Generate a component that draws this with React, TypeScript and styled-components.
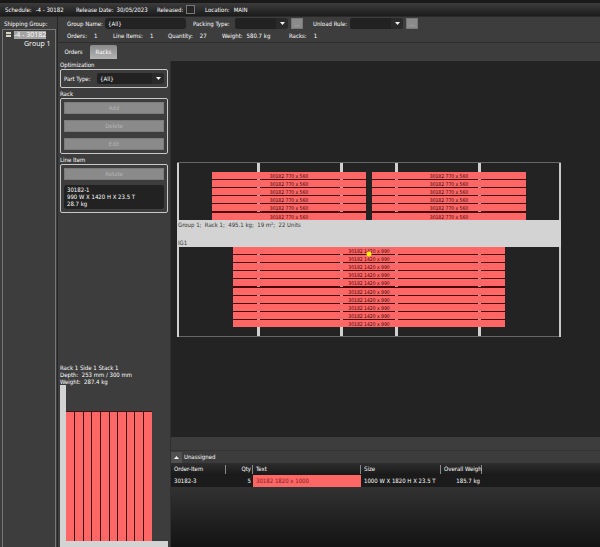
import React from "react";
import styled, { createGlobalStyle } from "styled-components";

const Global = createGlobalStyle`
  * { box-sizing: border-box; }
  body { margin: 0; background: #3d3d3d; }
  body, button, input, select, textarea {
    font-family: "DejaVu Sans Condensed", "DejaVu Sans", "Noto Sans", sans-serif;
    font-size: 6px;
    line-height: 8px;
    color: #fff;
  }
`;

const Page = styled.div`
  min-height: 100vh;
  display: flex;
  flex-direction: column;
  border-top: 3px solid #191919;
`;

const Header = styled.header`
  height: 14px;
  padding: 0 5px;
  display: grid;
  grid-template-columns: 71px 81px 48px 1fr;
  align-items: center;
  background: linear-gradient(#3c3c3c, #1b1b1b);
  border-bottom: 1px solid #2a2a2a;
  white-space: nowrap;
`;

const Pair = styled.span<{ $gap?: number }>`
  display: flex;
  align-items: center;
  gap: ${(p) => p.$gap ?? 4}px;
  white-space: nowrap;
`;

const Tick = styled.input`
  appearance: none;
  width: 9px;
  height: 9px;
  margin: 0;
  border: 1px solid #777;
  background: #262626;
`;

const Body = styled.div`
  flex: 1;
  display: grid;
  grid-template-columns: 58px 1fr;
`;

const Groups = styled.nav`
  display: flex;
  flex-direction: column;
  padding: 2px 1px 0 2px;
  border-right: 1px solid #262626;
`;

const GroupsTitle = styled.div`
  height: 10px;
  padding: 0 2px;
  line-height: 9px;
  white-space: nowrap;
`;

const Tree = styled.ul`
  flex: 1;
  margin: 0;
  padding: 0;
  list-style: none;
  border: 1px solid #777;
  border-bottom: 0;
  font-family: "Open Sans", "Noto Sans", sans-serif;
  font-size: 7px;
`;

const TreeItem = styled.li<{ $child?: boolean }>`
  display: flex;
  align-items: center;
  gap: 3px;
  height: 9px;
  padding-left: ${(p) => (p.$child ? 21 : 3)}px;
  white-space: nowrap;
`;

const Toggle = styled.button`
  width: 5px;
  height: 5px;
  padding: 0;
  border: 0;
  background: linear-gradient(#d8d4c4 40%, #555 40%, #555 60%, #d8d4c4 60%);
`;

const Picked = styled.span`
  background: #a5a5a5;
  color: #fff;
  height: 8px;
`;

const Main = styled.main`
  min-width: 0;
  display: flex;
  flex-direction: column;
`;

const Filters = styled.section`
  padding: 1px 9px 0;
  height: 26px;
  border-bottom: 1px solid #2d2d2d;
`;

const FilterRow = styled.div`
  display: flex;
  align-items: center;
  height: 11px;
`;

const FilterLabel = styled.label<{ $w: number }>`
  width: ${(p) => p.$w}px;
  white-space: nowrap;
`;

const NameBox = styled.input`
  width: 81px;
  height: 11px;
  margin-right: 7px;
  padding: 0 3px;
  border: 0;
  border-radius: 3px;
  background: #232323;
`;

const Drop = styled.span<{ $w?: number }>`
  display: grid;
  align-items: center;
  ${(p) => (p.$w ? `width: ${p.$w}px;` : "flex: 1;")}
  height: 11px;
  border-radius: 2px;
  background: linear-gradient(90deg, #222 calc(100% - 12px), #2a2a2a calc(100% - 12px));
  select, svg { grid-area: 1 / 1; }
  svg { justify-self: end; margin-right: 3px; pointer-events: none; }
`;

const Select = styled.select`
  appearance: none;
  width: 100%;
  height: 100%;
  padding: 0 3px;
  border: 0;
  background: transparent;
`;

const More = styled.button`
  width: 12px;
  height: 11px;
  margin: 0 10px 0 3px;
  padding: 0;
  border: 1px solid #777;
  background: #8b8b8b;
  color: #c4c4c4;
  line-height: 6px;
`;

const Stats = styled.div`
  display: grid;
  grid-template-columns: 46px 55px 54px 67px 1fr;
  height: 13px;
  align-items: center;
`;

const Tabs = styled.div`
  height: 18px;
  display: flex;
  align-items: center;
  gap: 1px;
`;

const Tab = styled.button<{ $on?: boolean }>`
  height: 14px;
  width: ${(p) => (p.$on ? 27 : 31)}px;
  padding: 0;
  border: 0;
  border-radius: 2px 2px 0 0;
  background: ${(p) => (p.$on ? "linear-gradient(#8a8a8a, #b4b4b4)" : "transparent")};
`;

const Work = styled.div`
  flex: 1;
  display: grid;
  grid-template-columns: 113px 1fr;
`;

const Side = styled.aside`
  display: flex;
  flex-direction: column;
  padding: 0 2px;
  border-right: 1px solid #303030;
`;

const GroupTitle = styled.h2`
  margin: 0;
  height: 8px;
  font-size: 6px;
  line-height: 8px;
  font-weight: 400;
`;

const Frame = styled.section<{ $gap?: number }>`
  display: flex;
  flex-direction: column;
  gap: ${(p) => p.$gap ?? 0}px;
  margin-bottom: 2px;
  padding: 3px;
  border: 1px solid #c9c9c9;
  border-radius: 2px;
`;

const Line = styled.div`
  display: flex;
  align-items: center;
`;

const Action = styled.button`
  height: 12px;
  padding: 0;
  border: 1px solid #7c7c7c;
  background: #8a8a8a;
  color: #b4b4b4;
`;

const Details = styled.div`
  margin-top: 5px;
  padding: 1px 3px;
  min-height: 24px;
  border-radius: 3px;
  background: #222;
  line-height: 7px;
  white-space: nowrap;
`;

const StackNote = styled.p`
  margin: auto 0 0;
  line-height: 7px;
`;

const Drawing = styled.svg`
  display: block;
  width: 100%;
  height: auto;
`;

const View = styled.div`
  min-width: 0;
  display: flex;
  flex-direction: column;
`;

const Canvas = styled.div`
  flex: 1;
  display: flex;
  align-items: center;
  padding: 1px 39px 0 6px;
  background: #232323;
`;

const Splitter = styled.div`
  height: 14px;
  border-bottom: 1px solid #333;
`;

const Unassigned = styled.section`
  height: 96px;
  background: linear-gradient(#333 35%, #131313);
`;

const PanelHead = styled.div`
  display: flex;
  align-items: center;
  gap: 2px;
  height: 12px;
  background: #3c3c3c;
`;

const Fold = styled.button`
  width: 11px;
  height: 11px;
  padding: 0;
  border: 0;
  display: grid;
  place-items: center;
  background: #505050;
`;

const Table = styled.table`
  width: 100%;
  table-layout: fixed;
  border-collapse: collapse;
  white-space: nowrap;
  th, td { height: 12px; padding: 0 2px 0 3px; font-weight: 400; text-align: left; }
  thead tr { background: linear-gradient(#2e2e2e, #191919); }
  tbody tr { background: #1b1b1b; }
  th { background: linear-gradient(#888, #888) right center / 1px 9px no-repeat; }
  th:last-child { background: none; }
`;

const HeadCell = styled.th<{ $right?: boolean }>`
  && { text-align: ${(p) => (p.$right ? "right" : "left")}; }
`;

const Cell = styled.td<{ $right?: boolean; $fill?: boolean }>`
  && {
    text-align: ${(p) => (p.$right ? "right" : "left")};
    ${(p) => p.$fill && "background: #ff6666; color: #7a2020;"}
  }
`;

const Arrow = ({ up }: { up?: boolean }) => (
  <svg width="5" height="3" viewBox="0 0 5 3" aria-hidden="true">
    <path d={up ? "M0 3L2.5 0L5 3Z" : "M0 0H5L2.5 3Z"} fill="#f4f4f4" />
  </svg>
);

const topRows = [10, 18, 26, 34, 42, 51];
const bottomRows = [85, 93, 101, 109, 117, 126, 134, 142, 150, 158];
const posts = [80, 163, 218, 301];

const Pane = ({ x, y, w, text }: { x: number; y: number; w: number; text: string }) => (
  <g>
    <rect x={x} y={y} width={w} height="7" fill="#ff6666" />
    <text x={x + w / 2} y={y + 6} fontSize="5" textAnchor="middle" fill="#3c0808">
      {text}
    </text>
  </g>
);

const RackPlan = () => (
  <Drawing viewBox="0 0 384 175" role="img" aria-label="Rack plan">
    <rect x="0.5" y="0.5" width="383" height="174" fill="none" stroke="#666" />
    {posts.map((x) => (
      <rect key={x} x={x} y="1" width="3" height="173" fill="#d0d0d0" />
    ))}
    <rect x="0" y="1" width="2" height="174" fill="#d0d0d0" />
    <rect x="382" y="1" width="2" height="174" fill="#c8c8c8" />
    <g fill="#4a0808">
      <rect x="35" y="10" width="154" height="48" />
      <rect x="195" y="10" width="154" height="48" />
      <rect x="56" y="85" width="272" height="80" />
    </g>
    {posts.map((x) => (
      <g key={x} fill="#c09090">
        {topRows.slice(0, 5).map((y) => (
          <rect key={y} x={x} y={y + 7} width="3" height="1" />
        ))}
        {bottomRows.slice(0, 9).map((y) => (
          <rect key={y} x={x} y={y + 7} width="3" height="1" />
        ))}
      </g>
    ))}
    {topRows.map((y) => (
      <g key={y}>
        <Pane x={35} y={y} w={154} text="30182 770 x 560" />
        <Pane x={195} y={y} w={154} text="30182 770 x 560" />
      </g>
    ))}
    <rect x="0" y="58" width="384" height="27" fill="#d3d3d3" />
    <text x="1" y="65" fontSize="6" fill="#333">
      {"Group 1;\u00a0 Rack 1;\u00a0 495.1 kg;\u00a0 19 m²;\u00a0 22 Units"}
    </text>
    <text x="1" y="83" fontSize="6" fill="#333">IG1</text>
    {bottomRows.map((y) => (
      <Pane key={y} x={56} y={y} w={272} text="30182 1420 x 990" />
    ))}
    <circle cx="192" cy="92" r="2.5" fill="#ffee00" />
  </Drawing>
);

const stackEdges = [6, 15, 24, 32, 41, 50, 58, 67, 75, 84, 93];

const StackPlan = () => (
  <Drawing viewBox="0 0 108 162" role="img" aria-label="Stack side view">
    <rect x="6" y="26" width="86" height="130" fill="#431212" />
    {stackEdges.slice(0, -1).map((x, i) => (
      <rect key={x} x={x} y="27" width={stackEdges[i + 1] - x - 1} height="129" fill="#ff6666" />
    ))}
    <rect x="0" y="0" width="6" height="162" fill="#d3d3d3" />
    <rect x="0" y="156" width="108" height="6" fill="#d3d3d3" />
  </Drawing>
);

export default function App() {
  return (
    <>
      <Global />
      <Page>
        <Header>
          <Pair><span>Schedule:</span><span>-4 - 30182</span></Pair>
          <Pair $gap={3}><span>Release Date:</span><span>30/05/2023</span></Pair>
          <Pair as="label" $gap={3}>Released:<Tick type="checkbox" /></Pair>
          <Pair><span>Location:</span><span>MAIN</span></Pair>
        </Header>
        <Body>
          <Groups>
            <GroupsTitle>Shipping Group:</GroupsTitle>
            <Tree>
              <TreeItem><Toggle aria-label="Collapse" /><Picked>-4 - 30182</Picked></TreeItem>
              <TreeItem $child>Group 1</TreeItem>
            </Tree>
          </Groups>
          <Main>
            <Filters>
              <FilterRow>
                <FilterLabel $w={38} htmlFor="name">Group Name:</FilterLabel>
                <NameBox id="name" defaultValue="{All}" />
                <FilterLabel $w={42} htmlFor="packing">Packing Type:</FilterLabel>
                <Drop $w={53}><Select id="packing" /><Arrow /></Drop>
                <More aria-label="Choose packing type">...</More>
                <FilterLabel $w={37} htmlFor="unload">Unload Rule:</FilterLabel>
                <Drop $w={53}><Select id="unload" /><Arrow /></Drop>
                <More aria-label="Choose unload rule">...</More>
              </FilterRow>
              <Stats>
                <Pair $gap={7}><span>Orders:</span><span>1</span></Pair>
                <Pair $gap={7}><span>Line Items:</span><span>1</span></Pair>
                <Pair $gap={7}><span>Quantity:</span><span>27</span></Pair>
                <Pair><span>Weight:</span><span>580.7 kg</span></Pair>
                <Pair $gap={7}><span>Racks:</span><span>1</span></Pair>
              </Stats>
            </Filters>
            <Tabs>
              <Tab>Orders</Tab>
              <Tab $on>Racks</Tab>
            </Tabs>
            <Work>
              <Side>
                <GroupTitle>Optimization</GroupTitle>
                <Frame>
                  <Line>
                    <FilterLabel $w={33} htmlFor="part">Part Type:</FilterLabel>
                    <Drop><Select id="part"><option>{"{All}"}</option></Select><Arrow /></Drop>
                  </Line>
                </Frame>
                <GroupTitle>Rack</GroupTitle>
                <Frame $gap={6}>
                  <Action>Add</Action>
                  <Action>Delete</Action>
                  <Action>Edit</Action>
                </Frame>
                <GroupTitle>Line Item</GroupTitle>
                <Frame>
                  <Action>Rotate</Action>
                  <Details>
                    30182-1<br />990 W X 1420 H X 23.5 T<br />28.7 kg
                  </Details>
                </Frame>
                <StackNote>
                  Rack 1 Side 1 Stack 1<br />Depth:&nbsp; 253 mm / 300 mm<br />Weight:&nbsp; 287.4 kg
                </StackNote>
                <StackPlan />
              </Side>
              <View>
                <Canvas><RackPlan /></Canvas>
                <Splitter />
                <Unassigned>
                  <PanelHead><Fold aria-label="Collapse"><Arrow up /></Fold>Unassigned</PanelHead>
                  <Table>
                    <colgroup>
                      <col width="55" /><col width="27" /><col width="108" /><col width="80" /><col width="41" /><col />
                    </colgroup>
                    <thead>
                      <tr>
                        <HeadCell>Order-Item</HeadCell>
                        <HeadCell $right>Qty</HeadCell>
                        <HeadCell>Text</HeadCell>
                        <HeadCell>Size</HeadCell>
                        <HeadCell>Overall Weigh</HeadCell>
                        <HeadCell />
                      </tr>
                    </thead>
                    <tbody>
                      <tr>
                        <Cell>30182-3</Cell>
                        <Cell $right>5</Cell>
                        <Cell $fill>30182 1820 x 1000</Cell>
                        <Cell>1000 W X 1820 H X 23.5 T</Cell>
                        <Cell $right>185.7 kg</Cell>
                        <Cell />
                      </tr>
                    </tbody>
                  </Table>
                </Unassigned>
              </View>
            </Work>
          </Main>
        </Body>
      </Page>
    </>
  );
}
